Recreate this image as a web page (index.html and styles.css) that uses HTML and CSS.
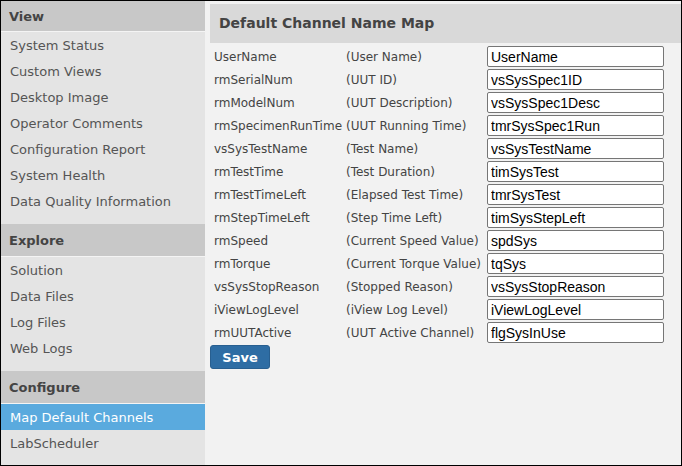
FILE: index.html
```html
<!DOCTYPE html>
<html>
<head>
<meta charset="utf-8">
<link rel="stylesheet" href="styles.css">
</head>
<body>
<div class="frame">
  <nav class="sidebar">
    <div class="sec-head first">View</div>
    <ul class="menu">
      <li>System Status</li>
      <li>Custom Views</li>
      <li>Desktop Image</li>
      <li>Operator Comments</li>
      <li>Configuration Report</li>
      <li>System Health</li>
      <li>Data Quality Information</li>
    </ul>
    <div class="sec-head">Explore</div>
    <ul class="menu">
      <li>Solution</li>
      <li>Data Files</li>
      <li>Log Files</li>
      <li>Web Logs</li>
    </ul>
    <div class="sec-head">Configure</div>
    <ul class="menu">
      <li class="active">Map Default Channels</li>
      <li>LabScheduler</li>
    </ul>
  </nav>
  <main class="main">
    <h1 class="title">Default Channel Name Map</h1>
    <div class="map">
      <span>UserName</span><span>(User Name)</span><input value="UserName">
      <span>rmSerialNum</span><span>(UUT ID)</span><input value="vsSysSpec1ID">
      <span>rmModelNum</span><span>(UUT Description)</span><input value="vsSysSpec1Desc">
      <span>rmSpecimenRunTime</span><span>(UUT Running Time)</span><input value="tmrSysSpec1Run">
      <span>vsSysTestName</span><span>(Test Name)</span><input value="vsSysTestName">
      <span>rmTestTime</span><span>(Test Duration)</span><input value="timSysTest">
      <span>rmTestTimeLeft</span><span>(Elapsed Test Time)</span><input value="tmrSysTest">
      <span>rmStepTimeLeft</span><span>(Step Time Left)</span><input value="timSysStepLeft">
      <span>rmSpeed</span><span>(Current Speed Value)</span><input value="spdSys">
      <span>rmTorque</span><span>(Current Torque Value)</span><input value="tqSys">
      <span>vsSysStopReason</span><span>(Stopped Reason)</span><input value="vsSysStopReason">
      <span>iViewLogLevel</span><span>(iView Log Level)</span><input value="iViewLogLevel">
      <span>rmUUTActive</span><span>(UUT Active Channel)</span><input value="flgSysInUse">
    </div>
    <button class="save">Save</button>
  </main>
</div>
</body>
</html>
```

FILE: styles.css
```css
* { box-sizing: border-box; }
html, body { margin: 0; padding: 0; }
body {
  width: 682px;
  height: 466px;
  overflow: hidden;
  font-family: "DejaVu Sans", Verdana, sans-serif;
  font-size: 13px;
}
.frame {
  width: 682px;
  height: 466px;
  border: 1px solid #000;
  display: flex;
  background: #f2f2f2;
}
.sidebar {
  width: 204px;
  flex: none;
  background: #e4e4e4;
  display: flex;
  flex-direction: column;
}
.sec-head {
  height: 33px;
  line-height: 30px;
  padding-top: 2px;
  background: #c8c8c8;
  border-bottom: 1px solid #f4f4f4;
  color: #444;
  font-weight: bold;
  padding-left: 8px;
  font-size: 13px;
}
.sec-head.first {
  height: 31px;
  line-height: 28px;
}
.menu {
  list-style: none;
  margin: 0 0 10px 0;
  padding: 0;
}
.menu li {
  height: 26px;
  line-height: 24px;
  padding-top: 2px;
  padding-left: 9px;
  color: #555;
  white-space: nowrap;
}
.menu li.active {
  background: #5aaade;
  color: #fff;
}
.main {
  flex: 1;
  padding: 3px 0 0 5px;
}
.title {
  margin: 0;
  height: 39px;
  line-height: 39px;
  background: #d9d9d9;
  color: #444;
  font-size: 14px;
  font-weight: bold;
  padding-left: 9px;
}
.map {
  margin-top: 2px;
  padding-left: 4px;
  display: grid;
  grid-template-columns: 132px 141px 177px;
  grid-auto-rows: 23px;
  align-items: center;
  color: #444;
  font-size: 12px;
}
.map span { white-space: nowrap; }
.map input {
  width: 177px;
  height: 21px;
  border: 1px solid #767676;
  border-radius: 2px;
  background: #fff;
  font-family: "Liberation Sans", Arial, sans-serif;
  font-size: 14px;
  color: #000;
  padding: 0 3px;
  margin: 0;
}
.save {
  margin-top: 1px;
  width: 60px;
  height: 24px;
  background: #2e6da4;
  border: 1px solid #285f90;
  border-radius: 3px;
  color: #fff;
  font-family: "DejaVu Sans", Verdana, sans-serif;
  font-weight: bold;
  font-size: 13px;
  padding: 0;
}
```
